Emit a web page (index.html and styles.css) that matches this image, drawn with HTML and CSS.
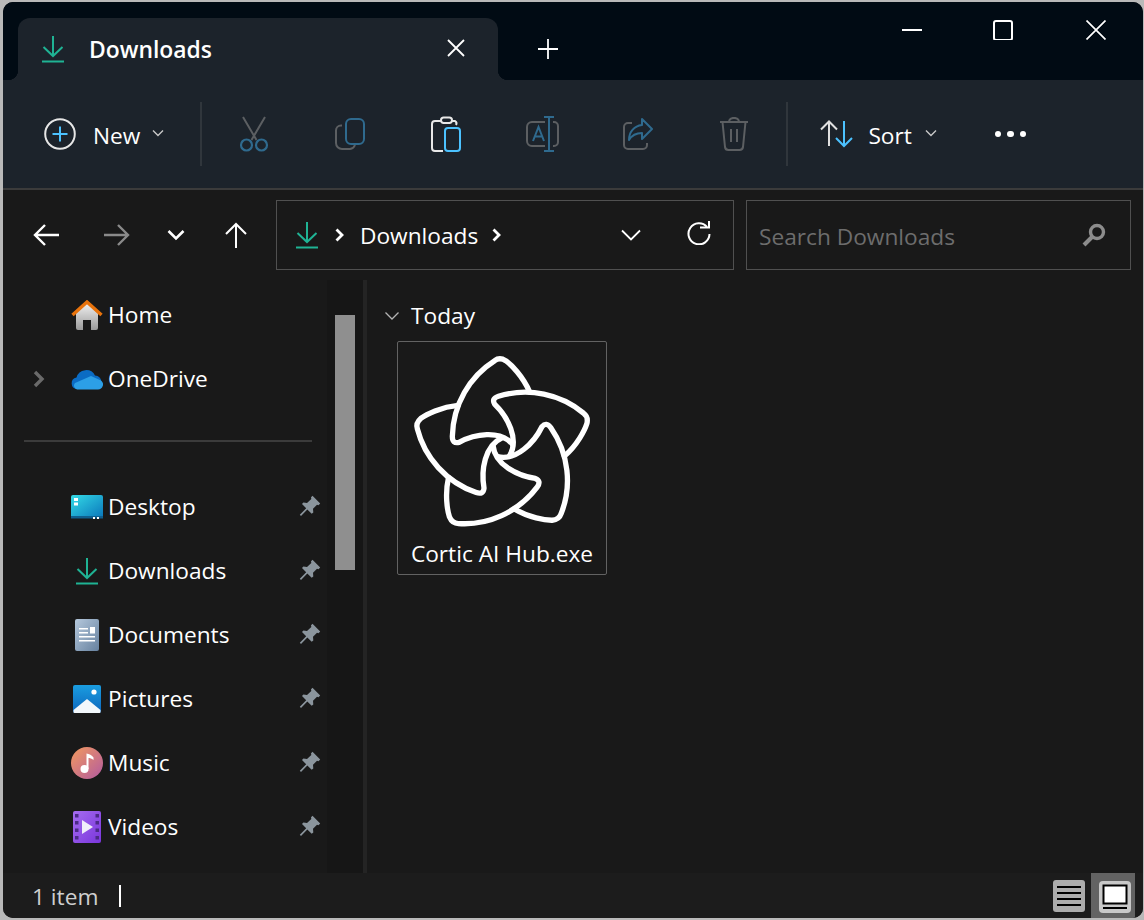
FILE: index.html
```html
<!DOCTYPE html>
<html lang="en">
<head>
    <meta charset="UTF-8">
    <meta name="viewport" content="width=device-width, initial-scale=1.0">
    <title>Downloads - File Explorer</title>
    <link rel="stylesheet" href="styles.css">
</head>
<body>

<svg class="sprites" width="0" height="0">
    <symbol id="i-download" viewBox="0 0 24 28">
        <path d="M12 1V21M2.500 12L12 21L21.500 12M1 26.500H23" fill="none" stroke="#1fb394" stroke-width="2"/>
    </symbol>
    <symbol id="i-pin" viewBox="0 0 22 22">
        <path d="M13.500 .8L21.200 8.500L19.500 10.200L18 9.800L14 13.800L14.300 17.500L12.700 18.800L8.300 14.400L2 21L.8 19.800L7.200 13.300L3 9.100L4.400 7.600L8 8L12.300 4L12 2.300Z" fill="#8b959d"/>
    </symbol>
</svg>

<div class="window">

    <!-- Tabs and window buttons -->
    <div class="titlebar">
        <div class="tab">
            <svg class="tab-icon" width="24" height="28"><use href="#i-download"/></svg>
            <span class="tab-title">Downloads</span>
            <svg class="tab-close" width="20" height="20" viewBox="0 0 20 20"><path d="M2 2L18 18M18 2L2 18" stroke="#fff" stroke-width="1.800"/></svg>
        </div>
        <svg class="tab-add" width="20" height="20" viewBox="0 0 20 20"><path d="M10 0V20M0 10H20" stroke="#fff" stroke-width="1.800"/></svg>
        <div class="win-controls">
            <svg width="20" height="20" viewBox="0 0 20 20"><path d="M0 10H20" stroke="#fff" stroke-width="2"/></svg>
            <svg width="20" height="20" viewBox="0 0 20 20"><rect x="1" y="1" width="18" height="19" rx="2" fill="none" stroke="#fff" stroke-width="2"/></svg>
            <svg width="20" height="20" viewBox="0 0 20 20"><path d="M.5 .5L19.500 19.500M19.500 .5L.5 19.500" stroke="#fff" stroke-width="1.700"/></svg>
        </div>
    </div>

    <!-- Command bar -->
    <div class="toolbar">
        <div class="cmd cmd-new">
            <svg width="32" height="32" viewBox="0 0 32 32"><circle cx="16" cy="16" r="14.800" fill="none" stroke="#e6e6e6" stroke-width="2"/><path d="M16 8.500V23.500M8.500 16H23.500" stroke="#4cc2ff" stroke-width="2"/></svg>
            <span>New</span>
            <svg class="cmd-caret" width="12" height="8" viewBox="0 0 12 8"><path d="M1 1.500L6 6.500L11 1.500" fill="none" stroke="#c8c8c8" stroke-width="1.400"/></svg>
        </div>
        <div class="divider"></div>
        <div class="icon-btn">
            <svg width="30" height="36" viewBox="0 0 30 36"><path d="M4 1L17.500 24M26 1L12.500 24" stroke="#5c5f62" stroke-width="2"/><circle cx="7.500" cy="29" r="5.500" fill="none" stroke="#2f6a8e" stroke-width="2.200"/><circle cx="22.500" cy="29" r="5.500" fill="none" stroke="#2f6a8e" stroke-width="2.200"/></svg>
        </div>
        <div class="icon-btn">
            <svg width="30" height="32" viewBox="0 0 30 32"><path d="M7 7.500H6A5 5 0 0 0 1 12.500V25A6 6 0 0 0 7 31H15A6 6 0 0 0 20 27" fill="none" stroke="#5c5f62" stroke-width="2"/><rect x="11" y="1" width="18" height="25" rx="5" fill="none" stroke="#2f6a8e" stroke-width="2"/></svg>
        </div>
        <div class="icon-btn">
            <svg width="30" height="36" viewBox="0 0 30 36"><path d="M11 5H4A3 3 0 0 0 1 8V32A3 3 0 0 0 4 35H12M20 5H24A3 3 0 0 1 25 9" fill="none" stroke="#e8e8e8" stroke-width="2"/><rect x="10" y="1.500" width="11" height="5.500" rx="2.700" fill="none" stroke="#e8e8e8" stroke-width="2"/><rect x="14" y="12" width="15" height="23" rx="3" fill="none" stroke="#4cc2ff" stroke-width="2"/></svg>
        </div>
        <div class="icon-btn">
            <svg width="33" height="36" viewBox="0 0 33 36"><path d="M19 6H6A5 5 0 0 0 1 11V25A5 5 0 0 0 6 30H19M27 6H28A4 4 0 0 1 32 10V26A4 4 0 0 1 28 30H27" fill="none" stroke="#5c5f62" stroke-width="2"/><path d="M7 25L12.500 11L18 25M9 20.500H16M18 1H28M23 1V35M18 35H28" fill="none" stroke="#2f6a8e" stroke-width="2"/></svg>
        </div>
        <div class="icon-btn">
            <svg width="30" height="32" viewBox="0 0 30 32"><path d="M9 5H5A4 4 0 0 0 1 9V27A4 4 0 0 0 5 31H20A4 4 0 0 0 24 27V25" fill="none" stroke="#5c5f62" stroke-width="2"/><path d="M19 1L29 11L19 21V15C13 15 9 17 6 22C6 14 11 8 19 7Z" fill="none" stroke="#2f6a8e" stroke-width="2" stroke-linejoin="round"/></svg>
        </div>
        <div class="icon-btn">
            <svg width="30" height="34" viewBox="0 0 30 34"><path d="M1 5H29M10 5C10 -.5 20 -.5 20 5M3.500 5L6 30A3.500 3.500 0 0 0 9.500 33H20.500A3.500 3.500 0 0 0 24 30L26.500 5M12 12V25M18 12V25" fill="none" stroke="#5c5f62" stroke-width="2"/></svg>
        </div>
        <div class="divider divider-right"></div>
        <div class="cmd cmd-sort">
            <svg width="34" height="28" viewBox="0 0 34 28"><path d="M9 26V1.500M1 9.500L9 1.500L17 9.500" fill="none" stroke="#e0e0e0" stroke-width="2"/><path d="M24 1V26M16 18L24 26L32 18" fill="none" stroke="#4cc2ff" stroke-width="2"/></svg>
            <span>Sort</span>
            <svg class="cmd-caret" width="12" height="8" viewBox="0 0 12 8"><path d="M1 1.500L6 6.500L11 1.500" fill="none" stroke="#c8c8c8" stroke-width="1.400"/></svg>
        </div>
        <div class="more-dots"><i></i><i></i><i></i></div>
    </div>

    <!-- Back, forward, address and search -->
    <div class="addressbar">
        <svg class="nav-back" width="26" height="24" viewBox="0 0 26 24"><path d="M26 12H2M12 2L2 12L12 22" fill="none" stroke="#fff" stroke-width="2.400"/></svg>
        <svg class="nav-forward" width="26" height="24" viewBox="0 0 26 24"><path d="M0 12H24M14 2L24 12L14 22" fill="none" stroke="#8a8a8a" stroke-width="2.400"/></svg>
        <svg class="nav-down" width="18" height="12" viewBox="0 0 18 12"><path d="M1.500 2L9 9.500L16.500 2" fill="none" stroke="#fff" stroke-width="2.600"/></svg>
        <svg class="nav-up" width="22" height="26" viewBox="0 0 22 26"><path d="M11 26V2M1 12L11 2L21 12" fill="none" stroke="#fff" stroke-width="2"/></svg>
        <div class="address">
            <svg class="address-icon" width="24" height="28"><use href="#i-download"/></svg>
            <svg class="crumb-sep" width="9" height="14" viewBox="0 0 9 14"><path d="M1.500 1.500L7 7L1.500 12.500" fill="none" stroke="#fff" stroke-width="2.800"/></svg>
            <span class="crumb">Downloads</span>
            <svg class="crumb-sep" width="9" height="14" viewBox="0 0 9 14"><path d="M1.500 1.500L7 7L1.500 12.500" fill="none" stroke="#fff" stroke-width="2.800"/></svg>
            <svg class="address-drop" width="20" height="12" viewBox="0 0 20 12"><path d="M1 1.500L10 10.500L19 1.500" fill="none" stroke="#fff" stroke-width="1.800"/></svg>
            <svg class="address-refresh" width="24" height="24" viewBox="0 0 24 24"><path d="M20 6A10.500 10.500 0 1 0 22.500 13" fill="none" stroke="#fff" stroke-width="2"/><path d="M13 6.500H22V-.5" fill="none" stroke="#fff" stroke-width="2"/></svg>
        </div>
        <div class="search">
            <span class="search-text">Search Downloads</span>
            <svg width="24" height="24" viewBox="0 0 24 24"><circle cx="15" cy="9" r="6.500" fill="none" stroke="#8c8c8c" stroke-width="3.400"/><path d="M10 14L2 22" stroke="#8c8c8c" stroke-width="4"/></svg>
        </div>
    </div>

    <div class="main">
        <!-- Navigation pane -->
        <div class="sidebar">
            <ul class="nav-list">
                <li class="nav-item">
                    <span class="nav-icon">
                        <svg width="32" height="31" viewBox="0 0 32 31">
                            <defs><linearGradient id="home-wall" x1="0" y1="0" x2="0" y2="1"><stop offset="0" stop-color="#f2f2f2"/><stop offset="1" stop-color="#9a9a9a"/></linearGradient></defs>
                            <path d="M5 13L16 3L27 13V28A2 2 0 0 1 25 30H20V20H12V30H7A2 2 0 0 1 5 28Z" fill="url(#home-wall)"/>
                            <path d="M1.500 15L16 2L30.500 15" fill="none" stroke="#e8730c" stroke-width="3.400"/>
                        </svg>
                    </span>
                    <span>Home</span>
                </li>
                <li class="nav-item">
                    <svg class="nav-expand" width="14" height="20" viewBox="0 0 14 20"><path d="M3 3L10 10L3 17" fill="none" stroke="#6a6a6a" stroke-width="3.400"/></svg>
                    <span class="nav-icon">
                        <svg width="32" height="22" viewBox="0 0 32 22">
                            <path d="M6 21A5.800 5.800 0 0 1 5.500 9.500A10 10 0 0 1 24 7.500A7 7 0 0 1 26 21Z" fill="#0b6cc4"/>
                            <path d="M6 21.500H27A5 5 0 0 0 30 12.500L20 8L4 15A4 4 0 0 0 6 21.500Z" fill="#2c9fe6"/>
                        </svg>
                    </span>
                    <span>OneDrive</span>
                </li>
                <li class="nav-sep"></li>
                <li class="nav-item">
                    <span class="nav-icon">
                        <svg width="32" height="25" viewBox="0 0 32 25">
                            <defs><linearGradient id="desk-fill" x1="0" y1="0" x2="1" y2="1"><stop offset="0" stop-color="#34dbe6"/><stop offset="1" stop-color="#0a76bb"/></linearGradient></defs>
                            <path d="M2 0H30A2 2 0 0 1 32 2V23H0V2A2 2 0 0 1 2 0Z" fill="url(#desk-fill)"/>
                            <rect y="21" width="32" height="2.500" fill="#0e5f8f"/>
                            <path d="M3 3H7V6H3ZM3 7.500H7V10.500H3ZM22 22H24V24H22ZM26 22H28V24H26Z" fill="#fff"/>
                        </svg>
                    </span>
                    <span>Desktop</span>
                    <svg class="pin" width="22" height="22"><use href="#i-pin"/></svg>
                </li>
                <li class="nav-item">
                    <span class="nav-icon"><svg width="24" height="28"><use href="#i-download"/></svg></span>
                    <span>Downloads</span>
                    <svg class="pin" width="22" height="22"><use href="#i-pin"/></svg>
                </li>
                <li class="nav-item">
                    <span class="nav-icon">
                        <svg width="24" height="32" viewBox="0 0 24 32">
                            <defs><linearGradient id="doc-fill" x1="0" y1="0" x2="1" y2="1"><stop offset="0" stop-color="#b5c8dc"/><stop offset="1" stop-color="#66819f"/></linearGradient></defs>
                            <rect width="24" height="32" rx="2" fill="url(#doc-fill)"/>
                            <path d="M4 9H13V10.500H4ZM4 13H13V14.500H4ZM4 17H20V18.500H4ZM4 21H20V22.500H4ZM15 8H20V14.500H15Z" fill="#fff"/>
                        </svg>
                    </span>
                    <span>Documents</span>
                    <svg class="pin" width="22" height="22"><use href="#i-pin"/></svg>
                </li>
                <li class="nav-item">
                    <span class="nav-icon">
                        <svg width="28" height="28" viewBox="0 0 28 28">
                            <defs><linearGradient id="pic-fill" x1="0" y1="0" x2="0" y2="1"><stop offset="0" stop-color="#1a9de0"/><stop offset="1" stop-color="#0d66bd"/></linearGradient></defs>
                            <rect width="28" height="28" rx="2" fill="url(#pic-fill)"/>
                            <circle cx="21" cy="7" r="2.600" fill="#fff"/>
                            <path d="M.5 25L14 14L27.500 25V27A1 1 0 0 1 26.500 28H1.500A1 1 0 0 1 .5 27Z" fill="#f2f7fb"/>
                        </svg>
                    </span>
                    <span>Pictures</span>
                    <svg class="pin" width="22" height="22"><use href="#i-pin"/></svg>
                </li>
                <li class="nav-item">
                    <span class="nav-icon">
                        <svg width="32" height="32" viewBox="0 0 32 32">
                            <defs><linearGradient id="music-fill" x1="0" y1="0" x2="1" y2="1"><stop offset="0" stop-color="#f39a5e"/><stop offset="1" stop-color="#b25aa0"/></linearGradient></defs>
                            <circle cx="16" cy="16" r="16" fill="url(#music-fill)"/>
                            <circle cx="13.500" cy="22" r="4" fill="#fff"/>
                            <path d="M15.500 22V6.500C18 7 21 8 22.500 10.500V13C20.500 11.500 19 11 17.500 11V22Z" fill="#fff"/>
                        </svg>
                    </span>
                    <span>Music</span>
                    <svg class="pin" width="22" height="22"><use href="#i-pin"/></svg>
                </li>
                <li class="nav-item">
                    <span class="nav-icon">
                        <svg width="28" height="32" viewBox="0 0 28 32">
                            <defs><linearGradient id="video-fill" x1="0" y1="0" x2="1" y2="1"><stop offset="0" stop-color="#a56cf0"/><stop offset="1" stop-color="#7a36dc"/></linearGradient></defs>
                            <rect width="28" height="32" rx="2" fill="url(#video-fill)"/>
                            <path d="M2 3H5.500V6.500H2ZM2 10H5.500V13.500H2ZM2 17.500H5.500V21H2ZM2 25H5.500V28.500H2ZM22.500 3H26V6.500H22.500ZM22.500 10H26V13.500H22.500ZM22.500 17.500H26V21H22.500ZM22.500 25H26V28.500H22.500Z" fill="#4b2a86"/>
                            <path d="M9 9L20 16L9 23Z" fill="#f0eefa"/>
                        </svg>
                    </span>
                    <span>Videos</span>
                    <svg class="pin" width="22" height="22"><use href="#i-pin"/></svg>
                </li>
            </ul>
            <div class="scroll-track"><div class="scroll-thumb"></div></div>
        </div>

        <!-- File area -->
        <div class="content">
            <div class="group-head">
                <svg width="14" height="8" viewBox="0 0 14 8"><path d="M.5 .5L7 7L13.500 .5" fill="none" stroke="#b4b4b4" stroke-width="1.300"/></svg>
                <span>Today</span>
            </div>
            <div class="file-tile">
                <svg class="file-icon" width="190" height="190" viewBox="-285 -285 570 570">
                    <g fill="none" stroke="#fff" stroke-width="16" stroke-linecap="round" stroke-linejoin="round">
                        <path id="petal" d="M80 -168C60 -215 25 -250 8 -262Q-10 -273 -25 -262C-100 -215 -150 -130 -152 -35Q-152 -12 -132 -17C-85 -42 -10 -55 28 -12"/>
                        <use href="#petal" transform="rotate(72)"/>
                        <use href="#petal" transform="rotate(144)"/>
                        <use href="#petal" transform="rotate(216)"/>
                        <use href="#petal" transform="rotate(288)"/>
                    </g>
                </svg>
                <span class="file-name">Cortic AI Hub.exe</span>
            </div>
        </div>
    </div>

    <!-- Status bar -->
    <div class="statusbar">
        <span class="status-text">1 item</span>
        <span class="status-bar-line"></span>
        <div class="view-btn">
            <svg width="32" height="32" viewBox="0 0 32 32"><rect width="32" height="32" rx="3" fill="#acacac"/><path d="M4 7H28M4 13H28M4 19H28M4 25H28" stroke="#000" stroke-width="2"/></svg>
        </div>
        <div class="view-btn view-btn-active">
            <svg width="32" height="32" viewBox="0 0 32 32"><rect width="32" height="32" rx="4" fill="#c8c8c8"/><rect x="4.500" y="4.500" width="23" height="18" fill="#fff" stroke="#000" stroke-width="2"/><path d="M4 27H28" stroke="#000" stroke-width="2"/></svg>
        </div>
    </div>

</div>

</body>
</html>
```

FILE: styles.css
```css
body {
    margin: 0;
    height: 920px;
    overflow: hidden;
    background-color: #b9b9b9;
    font-family: "Open Sans", "Noto Sans", sans-serif;
    font-size: 22.700px;
    color: #fff;
}

.sprites {
    display: block;
    position: absolute;
}

svg {
    display: block;
    flex-shrink: 0;
}

/* Window shell */
.window {
    margin: 2px 1px 2px 3px;
    height: 916px;
    border-radius: 10px;
    overflow: hidden;
    display: flex;
    flex-direction: column;
    background-color: #191919;
}

/* Title bar */
.titlebar {
    height: 78px;
    flex-shrink: 0;
    display: flex;
    padding-left: 15px;
    background-color: #010b14;
}

.tab {
    position: relative;
    width: 480px;
    height: 62px;
    margin-top: 16px;
    display: flex;
    align-items: center;
    border-radius: 12px 12px 0 0;
    background-color: #1c232b;
}

/* little flares where the tab meets the toolbar */
.tab::before,
.tab::after {
    content: "";
    position: absolute;
    bottom: 0;
    width: 10px;
    height: 10px;
}

.tab::before {
    left: -10px;
    background: radial-gradient(circle at 0 0, #010b14 10px, #1c232b 10.500px);
}

.tab::after {
    right: -10px;
    background: radial-gradient(circle at 100% 0, #010b14 10px, #1c232b 10.500px);
}

.tab-icon {
    margin-left: 23px;
}

.tab-title {
    margin-left: 24px;
    font-size: 22.900px;
    font-weight: 600;
}

.tab-close {
    margin-left: auto;
    margin-right: 32px;
    margin-top: -2px;
}

.tab-add {
    margin: 37px 0 0 40px;
}

.win-controls {
    margin-left: auto;
    padding-right: 1px;
    display: flex;
    align-items: center;
    height: 56px;
}

.win-controls svg {
    margin: 0 36px;
}

.win-controls svg:nth-child(2) {
    margin: 0 37px 0 35px;
}

/* Command bar */
.toolbar {
    height: 108px;
    flex-shrink: 0;
    display: flex;
    align-items: center;
    padding-left: 41px;
    background-color: #1c232b;
}

.cmd {
    display: flex;
    align-items: center;
}

.cmd span {
    margin-top: 2px;
}

.cmd-new span {
    margin-left: 17px;
}

.cmd-sort span {
    margin-left: 14px;
}

.cmd-caret {
    margin-left: 12px;
    margin-top: -2px;
}

.cmd-sort .cmd-caret {
    margin-left: 13px;
}

.divider {
    width: 2px;
    height: 64px;
    margin: 0 4px 0 36px;
    background-color: #30363c;
}

.divider-right {
    margin: 0 32px 0 4px;
}

.icon-btn {
    width: 96px;
    display: flex;
    justify-content: center;
}

.more-dots {
    display: flex;
    gap: 6px;
    margin-left: 58px;
}

.more-dots i {
    width: 6.500px;
    height: 6.500px;
    border-radius: 50%;
    background-color: #fff;
}

/* Address row */
.addressbar {
    height: 92px;
    flex-shrink: 0;
    display: flex;
    align-items: center;
    box-sizing: border-box;
    padding-left: 30px;
    border-top: 2px solid #3b3b3b;
    background-color: #191919;
}

.nav-forward {
    margin-left: 45px;
}

.nav-down {
    margin-left: 37px;
}

.nav-up {
    margin-left: 40px;
}

.address,
.search {
    height: 70px;
    box-sizing: border-box;
    border: 1px solid #505050;
    display: flex;
    align-items: center;
}

.address {
    width: 458px;
    margin-left: 29px;
    padding-left: 18px;
}

.crumb-sep {
    margin-left: 14px;
}

.address-icon + .crumb-sep {
    margin-left: 16px;
}

.crumb {
    margin-left: 16px;
}

.address-drop {
    margin-left: auto;
}

.address-refresh {
    margin: -4px 22px 0 46px;
}

.search {
    width: 385px;
    margin-left: 12px;
    padding: 0 24px 0 12px;
    justify-content: space-between;
    color: #6d6d6d;
}

.search-text {
    margin-top: 2px;
}

/* Main area */
.main {
    flex: 1;
    display: flex;
    min-height: 0;
}

.sidebar {
    width: 360px;
    flex-shrink: 0;
    display: flex;
    border-right: 4px solid #242424;
}

.nav-list {
    list-style: none;
    width: 319px;
    margin: 0;
    padding: 3px 6px 0 0;
}

.nav-item {
    position: relative;
    height: 64px;
    display: flex;
    align-items: center;
    padding-left: 65px;
    line-height: 1;
}

.nav-icon {
    width: 38px;
    display: flex;
    justify-content: center;
    margin-right: 2px;
}

.nav-expand {
    position: absolute;
    left: 29px;
}

.nav-sep {
    height: 2px;
    margin: 29px 9px 33px 21px;
    background-color: #3b3b3b;
}

.pin {
    margin-left: auto;
    margin-top: -2px;
}

.scroll-track {
    flex: 1;
    padding: 35px 8px 0 8px;
    background-color: #161616;
}

.scroll-thumb {
    width: 20px;
    height: 255px;
    background-color: #8f8f8f;
}

.content {
    flex: 1;
    padding-left: 17px;
}

.group-head {
    height: 61px;
    box-sizing: border-box;
    padding: 10px 0 0 1px;
    display: flex;
    align-items: center;
    gap: 12px;
}

.file-tile {
    width: 210px;
    height: 234px;
    margin-left: 13px;
    box-sizing: border-box;
    border: 1px solid #626262;
    border-radius: 2px;
    display: flex;
    flex-direction: column;
    align-items: center;
}

.file-icon {
    margin: 11px 0 0 2px;
}

.file-name {
    margin-top: -5px;
    white-space: nowrap;
}

/* Status bar */
.statusbar {
    height: 45px;
    flex-shrink: 0;
    display: flex;
    align-items: center;
    background-color: #1c1c1c;
    padding-left: 29px;
}

.status-text {
    margin-top: 2px;
    color: #cfcfcf;
}

.status-bar-line {
    width: 2px;
    height: 22px;
    margin-left: 21px;
    background-color: #fff;
}

.view-btn {
    height: 45px;
    width: 44px;
    display: flex;
    align-items: center;
    justify-content: center;
}

.status-bar-line + .view-btn {
    margin-left: auto;
}

.view-btn-active {
    margin-right: 8px;
    box-sizing: border-box;
    padding: 2px 0 0 4px;
    background-color: #636363;
}
```
